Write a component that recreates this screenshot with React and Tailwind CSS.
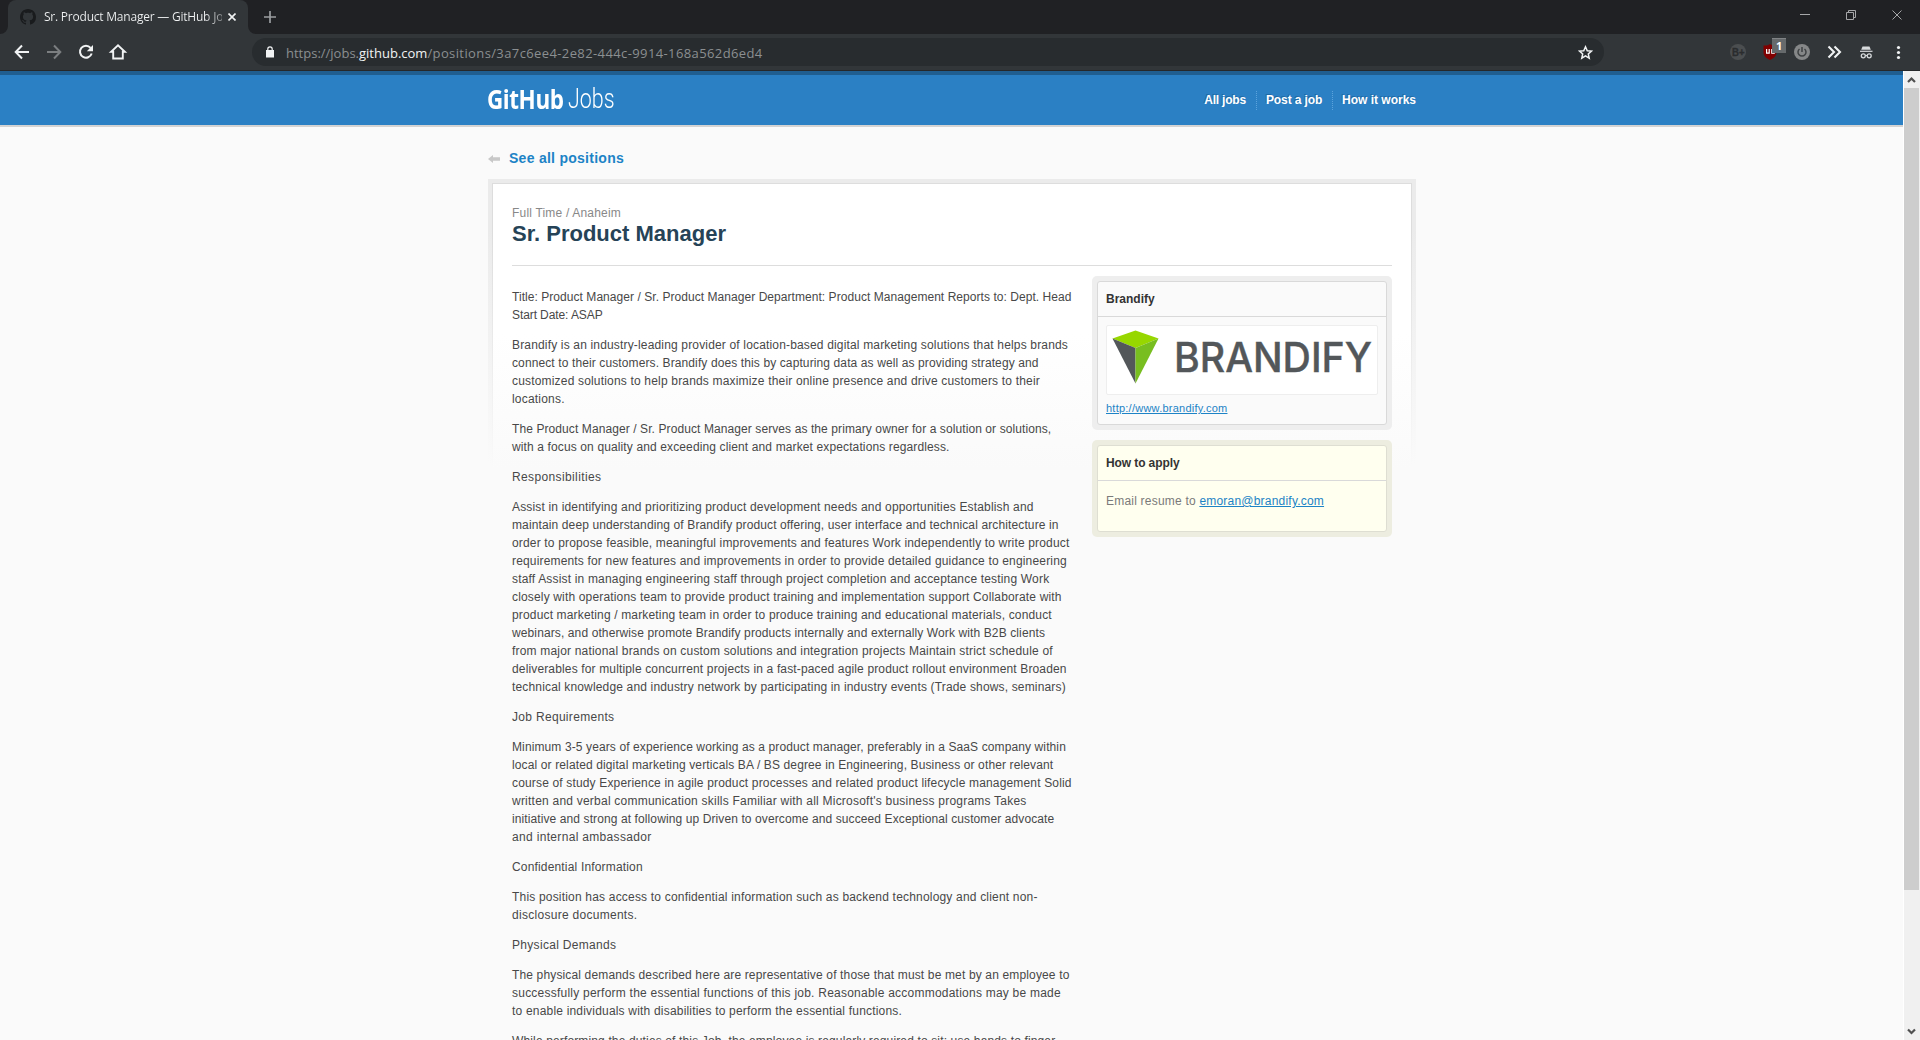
import React from "react";

// Each line is [text, extra width in px spread over its characters].
const PARAGRAPHS = [
  [
    ["Title: Product Manager / Sr. Product Manager Department: Product Management Reports to: Dept. Head", 5],
    ["Start Date: ASAP", -1.5],
  ],
  [
    ["Brandify is an industry-leading provider of location-based digital marketing solutions that helps brands", 17],
    ["connect to their customers. Brandify does this by capturing data as well as providing strategy and", 11],
    ["customized solutions to help brands maximize their online presence and drive customers to their", 17],
    ["locations.", 2],
  ],
  [
    ["The Product Manager / Sr. Product Manager serves as the primary owner for a solution or solutions,", 9],
    ["with a focus on quality and exceeding client and market expectations regardless.", 10],
  ],
  [["Responsibilities", 6]],
  [
    ["Assist in identifying and prioritizing product development needs and opportunities Establish and", 16],
    ["maintain deep understanding of Brandify product offering, user interface and technical architecture in", 12.5],
    ["order to propose feasible, meaningful improvements and features Work independently to write product", 16],
    ["requirements for new features and improvements in order to provide detailed guidance to engineering", 16.5],
    ["staff Assist in managing engineering staff through project completion and acceptance testing Work", 17],
    ["closely with operations team to provide product training and implementation support Collaborate with", 16],
    ["product marketing / marketing team in order to produce training and educational materials, conduct", 15.5],
    ["webinars, and otherwise promote Brandify products internally and externally Work with B2B clients", 11],
    ["from major national brands on custom solutions and integration projects Maintain strict schedule of", 18.5],
    ["deliverables for multiple concurrent projects in a fast-paced agile product rollout environment Broaden", 15],
    ["technical knowledge and industry network by participating in industry events (Trade shows, seminars)", 16],
  ],
  [["Job Requirements", 5]],
  [
    ["Minimum 3-5 years of experience working as a product manager, preferably in a SaaS company within", 11],
    ["local or related digital marketing verticals BA / BS degree in Engineering, Business or other relevant", 13],
    ["course of study Experience in agile product processes and related product lifecycle management Solid", 16],
    ["written and verbal communication skills Familiar with all Microsoft's business programs Takes", 21],
    ["initiative and strong at following up Driven to overcome and succeed Exceptional customer advocate", 10],
    ["and internal ambassador", 7.5],
  ],
  [["Confidential Information", 4]],
  [
    ["This position has access to confidential information such as backend technology and client non-", 18],
    ["disclosure documents.", 6],
  ],
  [["Physical Demands", 5]],
  [
    ["The physical demands described here are representative of those that must be met by an employee to", 14.5],
    ["successfully perform the essential functions of this job. Reasonable accommodations may be made", 22],
    ["to enable individuals with disabilities to perform the essential functions.", 14.5],
  ],
  [["While performing the duties of this Job, the employee is regularly required to sit; use hands to finger,", 14.5]],
];

function TabStrip() {
  return (
    <div className="flex h-[34px] items-stretch bg-[#202124]">
      <div className="relative ml-2 flex w-60 items-center rounded-t-lg bg-[#323639] pl-3">
        <svg className="absolute -left-2 bottom-0" width="8" height="8"><path d="M8 0v8H0a8 8 0 0 0 8-8z" fill="#323639" /></svg>
        <svg className="absolute -right-2 bottom-0" width="8" height="8"><path d="M0 0v8h8a8 8 0 0 1-8-8z" fill="#323639" /></svg>
        <svg width="16" height="16" viewBox="0 0 16 16" fill="#191b1d">
          <path d="M8 0C3.58 0 0 3.58 0 8c0 3.54 2.29 6.53 5.47 7.59.4.07.55-.17.55-.38 0-.19-.01-.82-.01-1.49-2.01.37-2.53-.49-2.69-.94-.09-.23-.48-.94-.82-1.13-.28-.15-.68-.52-.01-.53.63-.01 1.08.58 1.23.82.72 1.21 1.87.87 2.33.66.07-.52.28-.87.51-1.07-1.78-.2-3.64-.89-3.64-3.95 0-.87.31-1.59.82-2.15-.08-.2-.36-1.02.08-2.12 0 0 .67-.21 2.2.82.64-.18 1.32-.27 2-.27s1.36.09 2 .27c1.53-1.04 2.2-.82 2.2-.82.44 1.1.16 1.92.08 2.12.51.56.82 1.27.82 2.15 0 3.07-1.87 3.75-3.65 3.95.29.25.54.73.54 1.48 0 1.07-.01 1.93-.01 2.2 0 .21.15.46.55.38A8.01 8.01 0 0 0 16 8c0-4.42-3.58-8-8-8z" />
        </svg>
        <div className="ml-2 w-[178px] overflow-hidden whitespace-nowrap bg-[linear-gradient(90deg,#f1f3f4_160px,#323639_192px)] bg-clip-text font-['Open_Sans','Noto_Sans',sans-serif] text-[12px] leading-4 tracking-[-0.22px] text-transparent">
          Sr. Product Manager — GitHub Jo
        </div>
        <svg className="ml-[6px]" width="8" height="8" viewBox="0 0 8 8"><path d="M.5.5l7 7m0-7l-7 7" stroke="#f1f3f4" strokeWidth="1.6" /></svg>
      </div>
      <svg className="ml-4 mt-[11px]" width="12" height="12"><path d="M6 0v12M0 6h12" stroke="#9a9da0" strokeWidth="1.7" /></svg>
      <svg className="ml-auto" width="180" height="34" fill="none" stroke="#a6a7a9" strokeWidth="1">
        <path d="M60 14.5h10" />
        <path d="M106.5 12.5h7v7h-7zM108.5 12.5v-2h7v7h-2" />
        <path d="M152.5 10.5l9 9m0-9l-9 9" />
      </svg>
    </div>
  );
}

function Toolbar() {
  return (
    <div className="flex h-[37px] items-center border-b border-[#26282a] bg-[#323639]">
      <svg width="252" height="36" fill="none" stroke="#f1f3f4" strokeWidth="2">
        <path d="M29 18H16.5M22 11.5L15.7 18l6.3 6.5" />
        <path d="M47 18h12.5M54 11.5l6.3 6.5-6.3 6.5" stroke="#7b7e80" />
        <path d="M90.6 13.8A6 6 0 1 0 91.7 19.5" />
        <path d="M93 11v6.2h-6.2z" fill="#f1f3f4" stroke="none" />
        <path d="M113.2 17.8h-2.1l6.9-6.5 6.9 6.5h-2.1v6.7h-9.6z" strokeWidth="1.9" />
      </svg>
      <div className="flex h-7 w-[1352px] items-center rounded-full bg-[#282c2f]">
        <svg className="ml-[14px]" width="8" height="12"><path d="M0 4h8v7.5H0z" fill="#f1f3f4" /><path d="M1.8 4.5V3a2.2 2.2 0 0 1 4.4 0v1.5" fill="none" stroke="#f1f3f4" strokeWidth="1.2" /></svg>
        <div className="ml-[12px] mt-px whitespace-nowrap font-['Open_Sans','Noto_Sans',sans-serif] text-[13px] leading-5 text-[#8b8f91]">
          https://jobs.<span className="text-[#f1f3f4]">github.com</span>
          <span className="tracking-[0.39px]">/positions/3a7c6ee4-2e82-444c-9914-168a562d6ed4</span>
        </div>
        <svg className="ml-auto mr-[11px]" width="15" height="15" viewBox="0 0 15 15" fill="none" stroke="#f1f3f4" strokeWidth="1.5"><path d="M7.5 1.8l1.75 3.9 4.2.4-3.15 2.85.9 4.15-3.7-2.2-3.7 2.2.9-4.15L1.55 6.1l4.2-.4z" /></svg>
      </div>
      <svg width="316" height="36" viewBox="1604 34 316 36" fill="none">
        <circle cx="1738" cy="52" r="8" fill="#4b4e50" />
        <text x="1732" y="55.8" fill="#2a2c2e" stroke="#2a2c2e" strokeWidth="0.3" fontFamily="Liberation Sans" fontWeight="700" fontSize="10" textLength="12.5" lengthAdjust="spacingAndGlyphs">B+</text>
        <path d="M1763.5 45.5c2.500.3 4.500-.2 6.500-1.500 2 1.300 4.500 1.800 6.500 1.500v6.500c0 4-2.500 6-6.500 8-4-2-6.500-4-6.500-8z" fill="#800000" />
        <path d="M1766.6 49v4.2h2.6V49M1774.8 49.5h-3v3.7h3M1771.8 51.3h2.5" stroke="#fff" strokeWidth="1.2" />
        <rect x="1772" y="38" width="14" height="15" fill="#666a6c" />
        <path d="M1772 38.5h14" stroke="#818486" />
        <text x="1776" y="49.5" fill="#fff" fontFamily="Open Sans" fontWeight="700" fontSize="11">1</text>
        <circle cx="1802" cy="52" r="8" fill="#858788" />
        <path d="M1799.5 49a4 4 0 1 0 5 0M1802 47v5" stroke="#3e4143" strokeWidth="1.5" />
        <path d="M1828.5 46.5l5.5 5.5-5.5 5.5M1834.5 46.5l5.5 5.5-5.5 5.5" stroke="#f1f3f4" strokeWidth="2.1" />
        <g stroke="#d7dadc">
          <path d="M1862.500 46.500h7l1.300 3.200h-9.600z" fill="#d7dadc" stroke="none" />
          <path d="M1860 51.3h12.5" strokeWidth="1.2" />
          <circle cx="1863.3" cy="55.8" r="2" strokeWidth="1.3" />
          <circle cx="1869.2" cy="55.8" r="2" strokeWidth="1.3" />
          <path d="M1865.200 55.500h2" />
        </g>
        <g fill="#f1f3f4"><circle cx="1898.5" cy="47.5" r="1.6" /><circle cx="1898.5" cy="52.5" r="1.6" /><circle cx="1898.5" cy="57.5" r="1.6" /></g>
      </svg>
    </div>
  );
}

function SiteHeader() {
  return (
    <header className="h-14 border-b-2 border-t-4 border-b-[#d3d3d3] border-t-[#205e90] bg-[#2b80c4]">
      <div className="ml-[488px] flex w-[928px] items-start justify-between">
        <div className="flex pt-[8px] text-[27.5px] leading-8 text-white">
          <b className="-ml-[1px] w-[81px] origin-left scale-x-[0.816] whitespace-nowrap font-['Open_Sans',sans-serif] tracking-[-0.5px]">GitHub</b>
          <span className="origin-left scale-x-[0.78] whitespace-nowrap font-['Roboto',sans-serif] font-light">Jobs</span>
        </div>
        <nav className="mt-4 flex h-[19px] text-[12px] font-bold leading-[18px] text-white [text-shadow:-1px_-1px_0_#2069a5]">
          <a className="pr-[10px] tracking-[-0.2px]">All jobs</a>
          <a className="w-[76px] border-l border-dotted border-[#5ba3dc] pl-[9px] tracking-[-0.12px]">Post a job</a>
          <a className="border-l border-dotted border-[#5ba3dc] pl-[9px]">How it works</a>
        </nav>
      </div>
    </header>
  );
}

function Sidebar() {
  return (
    <aside className="mt-[10px] w-[300px] shrink-0 space-y-[10px]">
      <section className="rounded-[5px] bg-[#eee] p-[5px]">
        <div className="h-36 rounded-[3px] border border-[#d9d9d9] bg-[#fafafa]">
          <h2 className="h-[35px] border-b border-[#d9d9d9] pl-2 text-[12px] font-bold leading-[34px] text-[#333]">Brandify</h2>
          <div className="px-2 pt-2">
            <svg className="overflow-visible rounded-[2px] border border-[#eee] bg-white" width="272" height="70" viewBox="1 1 270 68">
              <path d="M6.500 13.500L29.500 5.500l23 8-23 9.500z" fill="#97d700" />
              <path d="M6.500 13.500l23 9.500v35.500z" fill="#53575a" />
              <path d="M52.500 13.500l-23 9.500v35.500z" fill="#78be20" />
              <text x="68" y="47.3" fill="#53575a" stroke="#53575a" strokeWidth="0.4" fontFamily="Inter" fontWeight="500" fontSize="41" textLength="198" lengthAdjust="spacingAndGlyphs">BRANDIFY</text>
            </svg>
            <a className="mt-[4px] block text-[11px] leading-[18px] tracking-[0.24px] text-[#1d83c6] underline">http://www.brandify.com</a>
          </div>
        </div>
      </section>
      <section className="rounded-[5px] bg-[#edede0] p-[5px]">
        <div className="h-[87px] rounded-[3px] border border-[#deded2] bg-[#ffffef]">
          <h2 className="h-[35px] border-b border-[#d9d9d9] pl-2 text-[12px] font-bold leading-[34px] tracking-[-0.1px] text-[#333]">How to apply</h2>
          <p className="pl-2 pt-[11px] text-[12px] leading-[18px] tracking-[0.21px] text-[#7a7a7a]">
            Email resume to <a className="text-[#1d83c6] underline">emoran@brandify.com</a>
          </p>
        </div>
      </section>
    </aside>
  );
}

function JobCard() {
  return (
    <div className="mt-[11px] bg-[linear-gradient(#ebebeb_0px,#ebebeb_50px,#fafafa_285px)] px-1 pt-1">
      <div className="bg-[linear-gradient(#dddddd_0px,#dddddd_50px,#fafafa_285px)] px-px pt-px">
        <div className="bg-[linear-gradient(#ffffff_0px,#ffffff_150px,#fafafa_285px)] px-[19px] pt-5">
          <p className="text-[12px] leading-[18px] tracking-[0.19px] text-[#888]">Full Time / Anaheim</p>
          <h1 className="h-[44px] border-b border-[#ddd] pb-[19px] text-[22px] font-bold leading-[23px] text-[#264357]">Sr. Product Manager</h1>
          <div className="flex justify-between">
            <article className="mt-[22px] whitespace-nowrap text-[12px] leading-[18px] text-[#484848]">
              {PARAGRAPHS.map((lines, i) => (
                <p key={i} className="mb-3">
                  {lines.map(([line, extra]) => (
                    <span key={line} className="block" style={{ letterSpacing: `${extra / line.length}px` }}>{line}</span>
                  ))}
                </p>
              ))}
            </article>
            <Sidebar />
          </div>
        </div>
      </div>
    </div>
  );
}

function Scrollbar() {
  return (
    <div className="flex w-[17px] shrink-0 flex-col border-l border-white bg-[#f0f0f0]">
      <svg width="16" height="17"><path d="M4 11l3.5-3.5L11 11" fill="none" stroke="#505050" strokeWidth="2.2" /></svg>
      <div className="h-[802px] w-[15px] bg-[#cdcdcd]" />
      <svg className="mt-auto" width="16" height="17"><path d="M4 6.5L7.5 10 11 6.5" fill="none" stroke="#505050" strokeWidth="2.2" /></svg>
    </div>
  );
}

export default function App() {
  return (
    <div className="flex h-[1040px] w-[1920px] flex-col overflow-hidden bg-[#fafafa] font-['Liberation_Sans',Arial,sans-serif]">
      <TabStrip />
      <Toolbar />
      <div className="flex min-h-0 flex-1">
        <div className="min-w-0 flex-1 overflow-hidden">
          <SiteHeader />
          <main className="ml-[488px] w-[928px] pt-[21px]">
            <a className="flex h-5 items-center text-[14px] font-bold leading-5 tracking-[0.27px] text-[#1d83c6]">
              <svg className="mr-[9px] mt-px" width="12" height="8"><path d="M0 4l5-4v2.2h7v3.6H5V8z" fill="#c8c8c8" /></svg>
              See all positions
            </a>
            <JobCard />
          </main>
        </div>
        <Scrollbar />
      </div>
    </div>
  );
}
